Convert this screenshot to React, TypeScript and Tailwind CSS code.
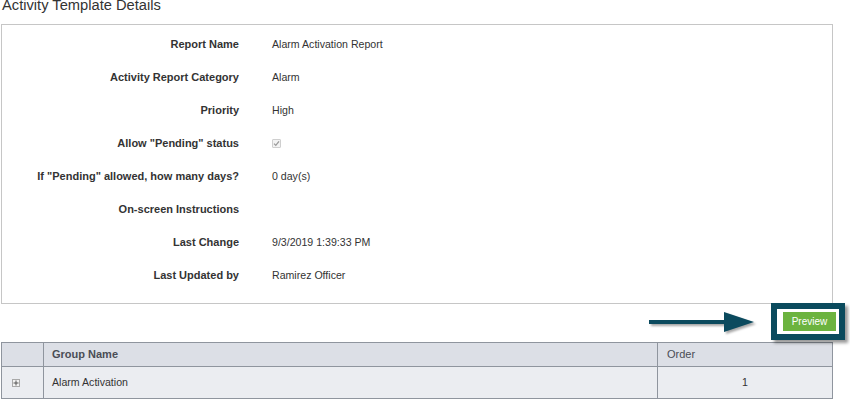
import React from 'react';

const rows: { label: string; value?: string; check?: boolean }[] = [
  { label: 'Report Name', value: 'Alarm Activation Report' },
  { label: 'Activity Report Category', value: 'Alarm' },
  { label: 'Priority', value: 'High' },
  { label: 'Allow "Pending" status', check: true },
  { label: 'If "Pending" allowed, how many days?', value: '0 day(s)' },
  { label: 'On-screen Instructions', value: '' },
  { label: 'Last Change', value: '9/3/2019 1:39:33 PM' },
  { label: 'Last Updated by', value: 'Ramirez Officer' },
];

function DisabledCheck() {
  return (
    <span className="w-[9px] h-[9px] border border-[#cfcfcf] bg-[#f3f3f3] rounded-[1px] flex items-center justify-center">
      <svg width="7" height="7" viewBox="0 0 7 7">
        <path d="M1 3.6 L2.8 5.4 L6 1.4" fill="none" stroke="#9a9a9a" strokeWidth="1.3" />
      </svg>
    </span>
  );
}

function PlusIcon() {
  return (
    <span className="w-[8px] h-[8px] border border-[#a9a9a9] bg-[#f2f2f2] flex items-center justify-center">
      <svg width="6" height="6" viewBox="0 0 6 6">
        <path d="M3 0.5 V5.5 M0.5 3 H5.5" stroke="#555" strokeWidth="1" />
      </svg>
    </span>
  );
}

export default function App() {
  return (
    <div className="w-[850px] h-[412px] bg-white overflow-hidden font-['Liberation_Sans',Arial,sans-serif] text-[#333]">
      <div className="pl-[1px] w-[833px]">
        {/* Title */}
        <div className="text-[14.7px] leading-[15px] -mt-[2px] mb-[11px] pl-[1px]">Activity Template Details</div>

        {/* Details box */}
        <div className="w-[832px] border border-[#c6c6c6] pt-[3px] pb-[11px]">
          {rows.map((r, i) => (
            <div key={i} className="flex items-center h-[33px]">
              <div className="w-[237px] text-right text-[11px] font-bold">{r.label}</div>
              <div className="ml-[33px] text-[10.6px]">
                {r.check ? <DisabledCheck /> : r.value}
              </div>
            </div>
          ))}
        </div>

        {/* Preview row */}
        <div className="h-[38px] flex items-start justify-end -mr-[12px]">
          <svg width="110" height="26" viewBox="0 0 110 26" className="mt-[5px] mr-[12px] drop-shadow-[2px_2px_1px_rgba(0,0,0,0.35)]">
            <rect x="0" y="11" width="80" height="4" fill="#0b4a5e" />
            <polygon points="75,3 105,13 75,23" fill="#0b4a5e" />
          </svg>
          <div className="-mt-[1px] border-[6px] border-[#0a4a5d] bg-white pl-[6px] pr-[3px] pt-[3px] pb-[3px] shadow-[3px_3px_3px_rgba(0,0,0,0.4)]">
            <div className="w-[53px] h-[19px] bg-[#6cb33f] text-white text-[10px] flex items-center justify-center">Preview</div>
          </div>
        </div>

        {/* Group table */}
        <div className="w-[832px] border border-[#8f959e]">
          <div className="flex h-[24px] bg-[#dcdfe6] border-b border-[#8f959e] text-[11px] text-[#4a4d55]">
            <div className="w-[42px] border-r border-[#8f959e]" />
            <div className="w-[614px] border-r border-[#8f959e] pl-2 flex items-center font-bold">Group Name</div>
            <div className="flex-1 pl-[9px] flex items-center">Order</div>
          </div>
          <div className="flex h-[31px] bg-[#ebedf1] text-[10.6px]">
            <div className="w-[42px] border-r border-[#8f959e] flex items-center pl-[10px]">
              <PlusIcon />
            </div>
            <div className="w-[614px] border-r border-[#8f959e] pl-2 flex items-center">Alarm Activation</div>
            <div className="flex-1 flex items-center justify-center">1</div>
          </div>
        </div>
      </div>
    </div>
  );
}
